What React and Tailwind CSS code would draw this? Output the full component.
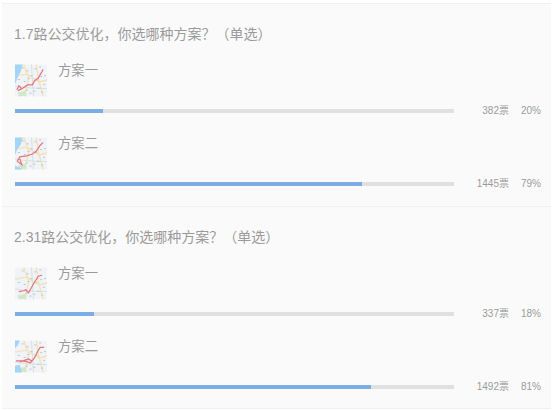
const polls = [
  {
    title: "1.7路公交优化\uFF0C你选哪种方案\uFF1F\uFF08单选\uFF09",
    options: [
      { name: "方案一", votes: 382, pct: 20, map: "a" },
      { name: "方案二", votes: 1445, pct: 79, map: "b" },
    ],
  },
  {
    title: "2.31路公交优化\uFF0C你选哪种方案\uFF1F\uFF08单选\uFF09",
    options: [
      { name: "方案一", votes: 337, pct: 18, map: "c" },
      { name: "方案二", votes: 1492, pct: 81, map: "d" },
    ],
  },
];

const routes = {
  a: "M2 26 L4 22 L7 25 L3 27 M7 25 L13 21 L18 21 L20 17 L24 14 L28 7 L29 5",
  b: "M2 25 L5 20 L12 19 L18 17 L22 14 L26 8 L29 5 M3 25 L7 28 L5 22",
  c: "M4 25 L9 24 L11 23 L14 26 L19 17 L24 9 L28 8",
  d: "M1 21 L8 21 L13 22 L16 23 L20 18 L24 10 L26 7 L30 7 M5 22 L14 19 L17 21",
};

const water = {
  a: "M0 0 H8 L6 7 L3 13 L0 20 Z",
  b: "M0 0 H8 L6 7 L2 13 L0 18 Z M0 29 L8 33 H0 Z",
  c: "",
  d: "M0 0 H5 L3 5 L0 8 Z M0 26 L5 25 L7 33 H0 Z",
};

// map speckle, the thumbnails are tiny blurred city maps
const specks = [
  [3, 15], [7, 3], [12, 6], [16, 11], [20, 4], [26, 12], [29, 20], [23, 24], [15, 29],
  [9, 17], [6, 30], [19, 27], [27, 28], [13, 14], [25, 2], [30, 11], [11, 26], [21, 15],
];

function MapThumb({ map }) {
  return (
    <svg width="32" height="33" viewBox="0 0 33 33" className="shrink-0">
      <defs>
        <filter id={`soft-${map}`} x="0" y="0" width="100%" height="100%">
          <feGaussianBlur stdDeviation="0.5" />
        </filter>
      </defs>
      <rect width="33" height="33" fill="#f0f3f8" />
      <g filter={`url(#soft-${map})`}>
        <path d="M0 12 L12 10 L25 18 L33 16 M9 0 L14 14 L10 33 M22 0 L24 14 L29 33" stroke="#f3e2b4" strokeWidth="1.4" fill="none" />
        <path d="M0 22 L12 24 L33 25 M17 0 L19 33" stroke="#d9dfe0" strokeWidth="1" fill="none" />
        {specks.map(([x, y]) => (
          <rect key={`${x}-${y}`} x={x} y={y} width="2" height="1" fill="#b9c2ce" />
        ))}
        <path d="M3 29 L11 27 L12 32 L4 33 Z" fill="#cfe8c8" />
        {water[map] && <path d={water[map]} fill="#a5d5f6" />}
        <path d={routes[map]} stroke="#e5757b" strokeWidth="1.3" fill="none" />
      </g>
    </svg>
  );
}

function OptionRow({ option }) {
  return (
    <div className="h-[73px]">
      <div className="flex gap-[11px]">
        <MapThumb map={option.map} />
        <span className="text-[13.33px] leading-[13px] text-[#9a9a9a]">{option.name}</span>
      </div>
      <div className="mt-[9px] flex items-center">
        <div className="h-[4px] w-[439px] bg-[#e0e0e0]">
          <div className="h-full bg-[#7daee3]" style={{ width: `${option.pct}%` }} />
        </div>
        <span className="w-[55px] text-right text-[10px] leading-[10px] text-[#9a9a9a]">{option.votes}票</span>
        <span className="w-[32px] text-right text-[10px] leading-[10px] text-[#9a9a9a]">{option.pct}%</span>
      </div>
    </div>
  );
}

export default function App() {
  return (
    <div className="h-[411px] bg-white pl-[2px] pr-[3px] pt-[3px] font-['Liberation_Sans','Noto_Sans_CJK_SC',sans-serif]">
      <div className="border-b border-[#f0f0f0]">
        {polls.map((poll) => (
          <div key={poll.title} className="h-[202.5px] border-t border-[#f0f0f0] bg-[#fafafa] pl-[13px]">
            <div className="-ml-px pt-[21px] text-[14px] leading-[18px] text-[#9a9a9a]">{poll.title}</div>
            <div className="mt-[21px]">
              {poll.options.map((o) => (
                <OptionRow key={o.name} option={o} />
              ))}
            </div>
          </div>
        ))}
      </div>
    </div>
  );
}
